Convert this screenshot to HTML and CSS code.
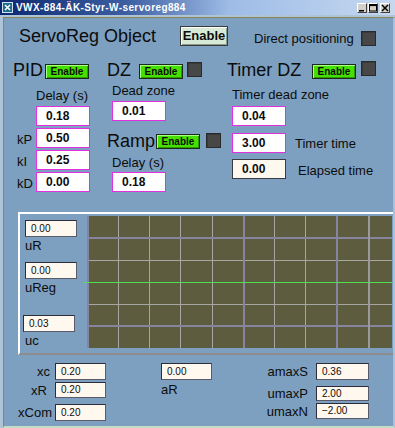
FILE: index.html
```html
<!DOCTYPE html>
<html>
<head>
<meta charset="utf-8">
<link rel="stylesheet" href="styles.css">
</head>
<body>
<div class="titlebar">
  <svg class="app-icon" width="11" height="11" viewBox="0 0 11 11"><rect x="0.5" y="0.5" width="10" height="10" fill="#1d6c8c" stroke="#cfe4f0"/><path d="M3 3 L8 8 M8 3 L3 8" stroke="#fff" stroke-width="1.6"/></svg>
  <span class="title">VWX-884-ÄK-Styr-W-servoreg884</span>
  <div class="wbtns">
    <span class="wbtn"><svg width="8" height="8" viewBox="0 0 8 8"><rect x="1" y="6" width="5" height="1.5" fill="#000"/></svg></span>
    <span class="wbtn"><svg width="8" height="8" viewBox="0 0 8 8"><rect x="0.5" y="0.5" width="7" height="6.5" fill="none" stroke="#000"/><rect x="0.5" y="0.5" width="7" height="1.6" fill="#000"/></svg></span>
    <span class="wbtn wclose"><svg width="8" height="8" viewBox="0 0 8 8"><path d="M1 1 L7 7 M7 1 L1 7" stroke="#000" stroke-width="1.5"/></svg></span>
  </div>
</div>
<div class="window">
  <div class="header">
    <span class="obj-title">ServoReg Object</span>
    <span class="btn-main">Enable</span>
    <span class="lbl dp">Direct positioning</span>
    <span class="chk chk-dp"></span>
  </div>

  <div class="sections">
    <div class="col col-pid">
      <div class="head">
        <span class="h h-pid">PID</span>
        <span class="btn-en">Enable</span>
      </div>
      <div class="lbl pid-delay">Delay (s)</div>
      <div class="irows">
        <div class="irow"><span class="rl"></span><span class="inp">0.18</span></div>
        <div class="irow"><span class="rl">kP</span><span class="inp">0.50</span></div>
        <div class="irow"><span class="rl">kI</span><span class="inp">0.25</span></div>
        <div class="irow"><span class="rl">kD</span><span class="inp">0.00</span></div>
      </div>
    </div>

    <div class="col col-dz">
      <div class="head">
        <span class="h h-dz">DZ</span>
        <span class="btn-en">Enable</span>
        <span class="chk chk-dz"></span>
      </div>
      <div class="lbl dz-lbl">Dead zone</div>
      <span class="inp dz-inp">0.01</span>
      <div class="head ramp-head">
        <span class="h h-ramp">Ramp</span>
        <span class="btn-en">Enable</span>
        <span class="chk chk-ramp"></span>
      </div>
      <div class="lbl ramp-lbl">Delay (s)</div>
      <span class="inp ramp-inp">0.18</span>
    </div>

    <div class="col col-tdz">
      <div class="head">
        <span class="h h-tdz">Timer DZ</span>
        <span class="btn-en">Enable</span>
        <span class="chk chk-tdz"></span>
      </div>
      <div class="lbl tdz-lbl">Timer dead zone</div>
      <span class="inp tdz-inp1">0.04</span>
      <div class="trow trow2"><span class="inp">3.00</span><span class="lbl tt">Timer time</span></div>
      <div class="trow trow3"><span class="inp inp-ro">0.00</span><span class="lbl et">Elapsed time</span></div>
    </div>
  </div>

  <div class="panel">
    <div class="sigs">
      <span class="cin cin1">0.00</span>
      <span class="lbl sig-l">uR</span>
      <span class="cin cin2">0.00</span>
      <span class="lbl sig-l">uReg</span>
      <span class="cin cin3">0.03</span>
      <span class="lbl sig-l">uc</span>
    </div>
    <svg class="graph" width="309" height="132" viewBox="0 0 309 132">
      <rect x="4" y="0" width="305" height="132" fill="#5e5c3f"/>
      <g stroke="#a6a6a2" stroke-width="1">
        <line x1="35.5" y1="0" x2="35.5" y2="132"/>
        <line x1="66.5" y1="0" x2="66.5" y2="132"/>
        <line x1="97.5" y1="0" x2="97.5" y2="132"/>
        <line x1="129.5" y1="0" x2="129.5" y2="132"/>
        <line x1="191.5" y1="0" x2="191.5" y2="132"/>
        <line x1="222.5" y1="0" x2="222.5" y2="132"/>
        <line x1="4" y1="44.5" x2="309" y2="44.5"/>
        <line x1="4" y1="88.5" x2="309" y2="88.5"/>
      </g>
      <g stroke="#86849e" stroke-width="2">
        <line x1="5" y1="0" x2="5" y2="132"/>
        <line x1="161" y1="0" x2="161" y2="132"/>
        <line x1="254" y1="0" x2="254" y2="132"/>
        <line x1="4" y1="22" x2="309" y2="22"/>
        <line x1="4" y1="110" x2="309" y2="110"/>
      </g>
      <line x1="286" y1="0" x2="286" y2="132" stroke="#9a9a9e" stroke-width="2"/>
      <line x1="0" y1="66.5" x2="309" y2="66.5" stroke="#4ee04e" stroke-width="1.2"/>
    </svg>
  </div>

  <div class="bottom">
    <div class="grp grp1">
      <div class="brow b1"><span class="blbl pr2">xc</span><span class="bin">0.20</span></div>
      <div class="brow b2"><span class="blbl pr5">xR</span><span class="bin">0.20</span></div>
      <div class="brow b3"><span class="blbl">xCom</span><span class="bin">0.20</span></div>
    </div>
    <div class="grp grp2">
      <span class="bin bin-ar">0.00</span>
      <span class="lbl ar-l">aR</span>
    </div>
    <div class="grp grp3">
      <div class="brow r1"><span class="blbl rl3">amaxS</span><span class="bin rin">0.36</span></div>
      <div class="brow r2"><span class="blbl rl3">umaxP</span><span class="bin rin">2.00</span></div>
      <div class="brow r3"><span class="blbl rl3">umaxN</span><span class="bin rin">&minus;2.00</span></div>
    </div>
  </div>
</div>
</body>
</html>
```
FILE: styles.css
```css
* { box-sizing: border-box; }
html, body {
  margin: 0;
  padding: 0;
}
body {
  width: 395px;
  height: 428px;
  overflow: hidden;
  background: #b0c4d8;
  font-family: "Liberation Sans", Arial, sans-serif;
  color: #0c0c0c;
}

/* title bar */
.titlebar {
  height: 15px;
  display: flex;
  align-items: center;
  background: linear-gradient(90deg, #0c2870 0%, #3c5fa2 32%, #9ebce6 58%, #c6d8f0 100%);
  padding-left: 2px;
}
.app-icon { display: block; flex: none; }
.title {
  margin-left: 3px;
  color: #fff;
  font-weight: bold;
  font-size: 10px;
  letter-spacing: 0.4px;
  line-height: 15px;
  white-space: nowrap;
}
.wbtns {
  margin-left: auto;
  margin-right: 5px;
  display: flex;
  gap: 1px;
}
.wbtn {
  width: 10px;
  height: 10px;
  background: #d4d0c8;
  border: 1px solid;
  border-color: #fff #404040 #404040 #fff;
  display: flex;
  align-items: center;
  justify-content: center;
}
.wbtn svg { display: block; }
.wclose { margin-left: 1px; }

/* window frame */
.window {
  margin: 2px 0 0 3px;
  height: 411px;
  background: #7da0c0;
  border-top: 1px solid #8a8656;
  border-left: 1px solid #8a8656;
  border-right: 2px solid #a8c0d8;
  border-bottom: 2px solid #c4dcc4;
}

.lbl {
  font-size: 13px;
  line-height: 15px;
  white-space: nowrap;
}

/* header */
.header {
  display: flex;
  align-items: flex-start;
  height: 20px;
  margin-top: 8px;
  padding-left: 15px;
}
.obj-title {
  width: 161px;
  font-size: 18px;
  line-height: 20px;
  white-space: nowrap;
}
.btn-main {
  width: 48px;
  height: 20px;
  background: #d6ead6;
  border: 1px solid #3a3a3a;
  box-shadow: inset 1px 1px #ffffff, inset -1px -1px #8a9a8a;
  font-weight: bold;
  font-size: 13px;
  line-height: 18px;
  text-align: center;
}
.dp {
  width: 101px;
  margin-left: 26px;
  margin-top: 5px;
}
.chk {
  width: 15px;
  height: 15px;
  background: #474747;
  border: 1px solid #2a2a2a;
  box-shadow: inset 1px 1px #3a3a3a;
  flex: none;
}
.chk-dp { margin-left: 6px; margin-top: 5px; }

/* sections */
.sections {
  display: flex;
  height: 152px;
  margin-top: 14px;
  padding-left: 9px;
}
.col { display: flex; flex-direction: column; align-items: flex-start; }
.col-pid { width: 94px; }
.col-dz { width: 120px; }
.col-tdz { flex: 1; }

.head {
  display: flex;
  align-items: flex-start;
  height: 20px;
}
.h {
  font-size: 18px;
  line-height: 20px;
  white-space: nowrap;
}
.h-pid { width: 32px; }
.h-dz { width: 32px; }
.h-ramp { width: 49px; }
.h-tdz { width: 85px; }

.btn-en {
  width: 44px;
  height: 15px;
  margin-top: 4px;
  background: #46e000;
  border: 1px solid #1c2a1c;
  box-shadow: inset 1px 1px #a8ff88, inset -1px -1px #2c9a00;
  font-weight: bold;
  font-size: 10px;
  line-height: 13px;
  text-align: center;
  flex: none;
}
.chk-dz { margin-left: 4px; margin-top: 2px; }
.chk-ramp { margin-left: 6px; margin-top: 2px; }
.chk-tdz { margin-left: 5px; margin-top: 1px; }

.inp {
  display: block;
  width: 54px;
  height: 20px;
  background: #ffffff;
  border: 1px solid #e030e0;
  font-weight: bold;
  font-size: 12px;
  line-height: 18px;
  padding-left: 9px;
  flex: none;
}
.inp-ro {
  background: #fff8ee;
  border-color: #3a3a44;
}

/* PID column */
.pid-delay { margin-top: 8px; margin-left: 23px; }
.irows {
  margin-top: 3px;
  display: flex;
  flex-direction: column;
  gap: 2px;
}
.irow { display: flex; align-items: center; }
.rl {
  width: 23px;
  padding-left: 4px;
  font-size: 13px;
  line-height: 15px;
  padding-top: 3px;
}

/* DZ / Ramp column */
.dz-lbl { margin-top: 3px; margin-left: 5px; }
.dz-inp { margin-top: 3px; margin-left: 5px; }
.ramp-head { margin-top: 10px; }
.ramp-head .btn-en { margin-top: 3px; }
.ramp-lbl { margin-top: 4px; margin-left: 5px; }
.ramp-inp { margin-top: 2px; margin-left: 5px; }

/* Timer DZ column */
.tdz-lbl { margin-top: 7px; margin-left: 5px; }
.tdz-inp1 { margin-top: 4px; margin-left: 5px; }
.trow {
  display: flex;
  align-items: flex-start;
  margin-left: 5px;
}
.trow2 { margin-top: 7px; }
.trow3 { margin-top: 6px; }
.tt { margin-left: 9px; margin-top: 3px; }
.et { margin-left: 12px; margin-top: 4px; }

/* graph panel */
.panel {
  display: flex;
  align-items: flex-start;
  margin-left: 14px;
  height: 143px;
  border-top: 2px solid #ffffff;
  border-left: 2px solid #ffffff;
  border-bottom: 2px solid #8c8c8c;
}
.sigs {
  width: 63px;
  flex: none;
  display: flex;
  flex-direction: column;
  align-items: flex-start;
  padding-left: 5px;
}
.cin {
  display: block;
  width: 52px;
  height: 17px;
  background: #fff8ee;
  border: 1px solid #2c2c3a;
  border-right-color: #5a5a6a;
  border-bottom-color: #5a5a6a;
  font-size: 10px;
  line-height: 15px;
  padding-left: 5px;
}
.cin1 { margin-top: 6px; }
.cin2 { margin-top: 9px; }
.cin3 { margin-top: 20px; margin-left: -2px; }
.sig-l { margin-top: 1px; }
.graph { display: block; margin-top: 2px; flex: none; }

/* bottom section */
.bottom {
  display: flex;
  align-items: flex-start;
  padding-top: 8px;
}
.grp { display: flex; flex-direction: column; align-items: flex-start; }
.brow { display: flex; align-items: center; }
.blbl {
  width: 48px;
  text-align: right;
  font-size: 13px;
  line-height: 15px;
  white-space: nowrap;
}
.pr2 { padding-right: 2px; }
.pr5 { padding-right: 5px; }
.bin {
  display: block;
  width: 51px;
  height: 17px;
  margin-left: 3px;
  background: #fff8ee;
  border: 1px solid #2c2c3a;
  border-right-color: #5a5a6a;
  border-bottom-color: #5a5a6a;
  font-size: 10px;
  line-height: 15px;
  padding-left: 5px;
  flex: none;
}
.b1 .bin { height: 17px; }
.b2 { margin-top: 2px; }
.b2 .bin { height: 16px; line-height: 14px; }
.b3 { margin-top: 6px; }

.grp2 { margin-left: 52px; }
.bin-ar { width: 51px; }
.ar-l { margin-top: 2px; margin-left: 3px; }

.grp3 { margin-left: 46px; }
.rl3 { width: 50px; }
.rin { width: 53px; margin-left: 8px; }
.r2 { margin-top: 6px; }
.r2 .rin { height: 15px; line-height: 13px; }
.r3 { margin-top: 2px; }
.r3 .rin { height: 16px; line-height: 14px; }
```
